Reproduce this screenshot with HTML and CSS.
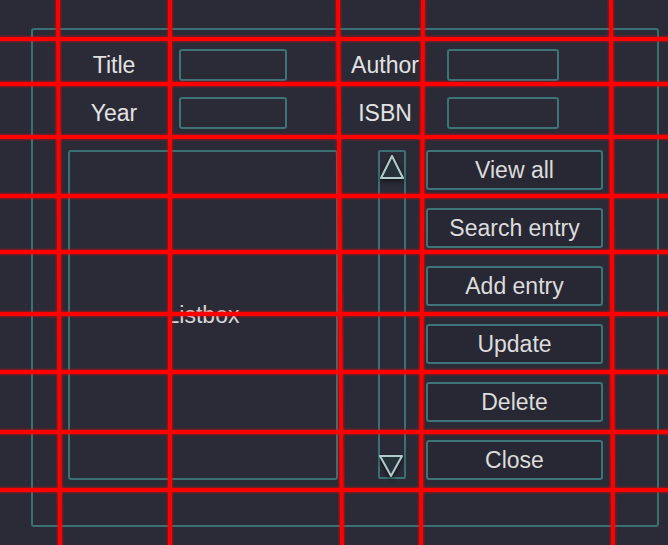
FILE: index.html
```html
<!DOCTYPE html>
<html>
<head>
<meta charset="utf-8">
<link rel="stylesheet" href="styles.css">
</head>
<body>
<div class="frame">
  <div class="form">
    <div class="row">
      <span class="label label-a">Title</span>
      <div class="entry entry-a"></div>
      <span class="label label-b">Author</span>
      <div class="entry entry-b"></div>
    </div>
    <div class="row">
      <span class="label label-a">Year</span>
      <div class="entry entry-a"></div>
      <span class="label label-b">ISBN</span>
      <div class="entry entry-b"></div>
    </div>
  </div>
  <div class="main">
    <div class="listbox">Listbox</div>
    <div class="scroll">
      <svg class="arrow" width="28" height="32" viewBox="0 0 28 32"><polygon points="14,5 25,27 3,27" /></svg>
      <svg class="arrow" width="28" height="32" viewBox="0 0 28 32"><polygon points="2,10 24,10 13,30" /></svg>
    </div>
    <div class="buttons">
      <div class="btn">View all</div>
      <div class="btn">Search entry</div>
      <div class="btn">Add entry</div>
      <div class="btn">Update</div>
      <div class="btn">Delete</div>
      <div class="btn">Close</div>
    </div>
  </div>
</div>
<svg class="overlay" width="668" height="545" viewBox="0 0 668 545">
  <g class="glow">
    <line x1="58" y1="0" x2="60" y2="545"/>
    <line x1="170" y1="0" x2="170" y2="545"/>
    <line x1="338" y1="0" x2="342" y2="545"/>
    <line x1="423" y1="0" x2="421" y2="545"/>
    <line x1="611" y1="0" x2="613" y2="545"/>
    <line x1="0" y1="39" x2="668" y2="39"/>
    <line x1="0" y1="84" x2="668" y2="84"/>
    <line x1="0" y1="137" x2="668" y2="137"/>
    <line x1="0" y1="196" x2="668" y2="196"/>
    <line x1="0" y1="252" x2="668" y2="252"/>
    <line x1="0" y1="314" x2="668" y2="314"/>
    <line x1="0" y1="372" x2="668" y2="372"/>
    <line x1="0" y1="432" x2="668" y2="432"/>
    <line x1="0" y1="490" x2="668" y2="490"/>
  </g>
  <g class="core">
    <line x1="58" y1="0" x2="60" y2="545"/>
    <line x1="170" y1="0" x2="170" y2="545"/>
    <line x1="338" y1="0" x2="342" y2="545"/>
    <line x1="423" y1="0" x2="421" y2="545"/>
    <line x1="611" y1="0" x2="613" y2="545"/>
    <line x1="0" y1="39" x2="668" y2="39"/>
    <line x1="0" y1="84" x2="668" y2="84"/>
    <line x1="0" y1="137" x2="668" y2="137"/>
    <line x1="0" y1="196" x2="668" y2="196"/>
    <line x1="0" y1="252" x2="668" y2="252"/>
    <line x1="0" y1="314" x2="668" y2="314"/>
    <line x1="0" y1="372" x2="668" y2="372"/>
    <line x1="0" y1="432" x2="668" y2="432"/>
    <line x1="0" y1="490" x2="668" y2="490"/>
  </g>
</svg>
</body>
</html>
```
FILE: styles.css
```css
html, body {
  margin: 0;
  padding: 0;
}
body {
  width: 668px;
  height: 545px;
  overflow: hidden;
  position: relative;
  background: #2b2b37;
  font-family: "Liberation Sans", Arial, sans-serif;
  color: #e2e2e2;
}
.frame {
  box-sizing: border-box;
  width: 628px;
  height: 499px;
  margin: 28px 0 0 31px;
  padding-top: 19px;
  border: 2px solid #3a7073;
  border-radius: 3px;
}
.form {
  display: flex;
  flex-direction: column;
  gap: 16px;
}
.row {
  display: flex;
  align-items: center;
  height: 32px;
}
.label {
  font-size: 23px;
  text-align: center;
  line-height: 32px;
}
.label-a {
  margin-left: 25px;
  width: 112px;
}
.label-b {
  margin-left: 50px;
  width: 96px;
}
.entry {
  box-sizing: border-box;
  height: 32px;
  border: 2px solid #3c7477;
  border-radius: 3px;
}
.entry-a {
  margin-left: 9px;
  width: 108px;
}
.entry-b {
  margin-left: 14px;
  width: 112px;
}
.main {
  display: flex;
  align-items: flex-start;
  margin-top: 21px;
  padding-left: 35px;
}
.listbox {
  box-sizing: border-box;
  width: 270px;
  height: 330px;
  border: 2px solid #3a7073;
  border-radius: 3px;
  display: flex;
  align-items: center;
  justify-content: center;
  font-size: 23px;
  color: #d6d6d6;
}
.scroll {
  box-sizing: border-box;
  width: 28px;
  height: 329px;
  margin-left: 40px;
  border: 2px solid #3a7073;
  border-radius: 2px;
  display: flex;
  flex-direction: column;
  justify-content: space-between;
  align-items: center;
}
.arrow {
  display: block;
  flex: none;
  margin: -1px -2px;
  filter: drop-shadow(0 2px 2px rgba(0, 0, 0, 0.6));
}
.arrow polygon {
  fill: #26323a;
  stroke: #b3caca;
  stroke-width: 2;
  stroke-linejoin: round;
}
.buttons {
  margin-left: 20px;
  width: 177px;
  display: flex;
  flex-direction: column;
  gap: 18px;
}
.btn {
  box-sizing: border-box;
  height: 40px;
  border: 2px solid #3c7477;
  border-radius: 3px;
  background: #282834;
  display: flex;
  align-items: center;
  justify-content: center;
  font-size: 23px;
  color: #dcdcdc;
}
.overlay {
  position: absolute;
  left: 0;
  top: 0;
  pointer-events: none;
}
.overlay .glow line {
  stroke: rgba(255, 0, 0, 0.3);
  stroke-width: 7;
}
.overlay .core line {
  stroke: #ff0000;
  stroke-width: 4;
}
```
